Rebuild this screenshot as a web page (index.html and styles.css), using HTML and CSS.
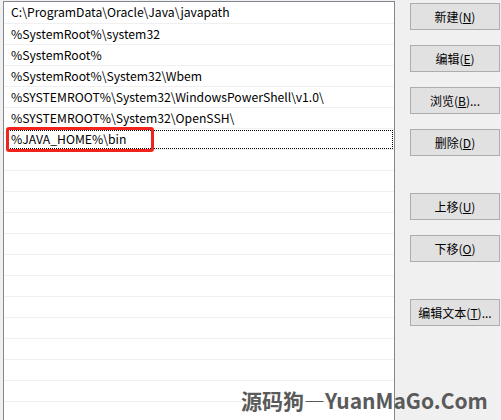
FILE: index.html
```html
<!DOCTYPE html>
<html lang="zh-CN">
<head>
    <meta charset="UTF-8">
    <title>编辑环境变量</title>
    <link rel="stylesheet" href="styles.css">
</head>
<body>
    <div class="ventana">
        <div class="lista">
            <div class="fila">C:\ProgramData\Oracle\Java\javapath</div>
            <div class="fila">%SystemRoot%\system32</div>
            <div class="fila">%SystemRoot%</div>
            <div class="fila">%SystemRoot%\System32\Wbem</div>
            <div class="fila">%SYSTEMROOT%\System32\WindowsPowerShell\v1.0\</div>
            <div class="fila">%SYSTEMROOT%\System32\OpenSSH\</div>
            <div class="fila activa"><span class="marca">%JAVA_HOME%\bin</span></div>
            <div class="fila"></div>
            <div class="fila"></div>
            <div class="fila"></div>
            <div class="fila"></div>
            <div class="fila"></div>
            <div class="fila"></div>
            <div class="fila"></div>
            <div class="fila"></div>
            <div class="fila"></div>
            <div class="fila"></div>
            <div class="fila"></div>
            <div class="fila"></div>
        </div>
        <div class="botones">
            <button class="boton">新建(<u>N</u>)</button>
            <button class="boton">编辑(<u>E</u>)</button>
            <button class="boton">浏览(<u>B</u>)...</button>
            <button class="boton">删除(<u>D</u>)</button>
            <button class="boton separado">上移(<u>U</u>)</button>
            <button class="boton">下移(<u>O</u>)</button>
            <button class="boton separado">编辑文本(<u>T</u>)...</button>
        </div>
    </div>
    <div class="marca-agua">源码狗—YuanMaGo.Com</div>
</body>
</html>
```

FILE: styles.css
```css
html, body {
    margin: 0;
    height: 100%;
    overflow: hidden;
}

body {
    background: #f0f0f0;
    font-family: "Noto Sans CJK SC", "Noto Sans", sans-serif;
    font-size: 12px;
    color: #000;
    position: relative;
}

.ventana {
    display: flex;
    height: 100%;
}

.lista {
    width: 390px;
    margin: 1px 0 0 3px;
    border: 1px solid #828790;
    border-bottom: none;
    background: #fff;
    overflow: hidden;
    font-size: 12.2px;
}

.fila {
    height: 20px;
    line-height: 20px;
    padding-left: 7px;
    border-bottom: 1px solid #f0f0f0;
    white-space: nowrap;
}

.fila:first-child {
    height: 21px;
    line-height: 21px;
}

.fila.activa {
    position: relative;
}

/* rectangulo de foco punteado */
.fila.activa::after {
    content: "";
    position: absolute;
    left: 2px;
    right: 1px;
    top: 1px;
    bottom: 0;
    border: 1px dotted #000;
}

/* recuadro rojo de la captura */
.marca {
    position: relative;
}

.marca::before {
    content: "";
    position: absolute;
    left: -5px;
    top: -3px;
    width: 142px;
    height: 19px;
    border: 3px solid #f0241c;
    border-radius: 3px;
    z-index: 2;
}

.botones {
    display: flex;
    flex-direction: column;
    gap: 15px;
    margin: 3px 0 0 15px;
}

.boton {
    width: 90px;
    height: 27px;
    padding: 0;
    background: #e1e1e1;
    border: 1px solid #adadad;
    font-family: inherit;
    font-size: 12px;
    color: #000;
}

.boton.separado {
    margin-top: 22px;
}

.marca-agua {
    position: absolute;
    left: 241px;
    top: 385px;
    font-size: 21px;
    font-weight: bold;
    color: #5a5a5a;
    white-space: nowrap;
}
```
